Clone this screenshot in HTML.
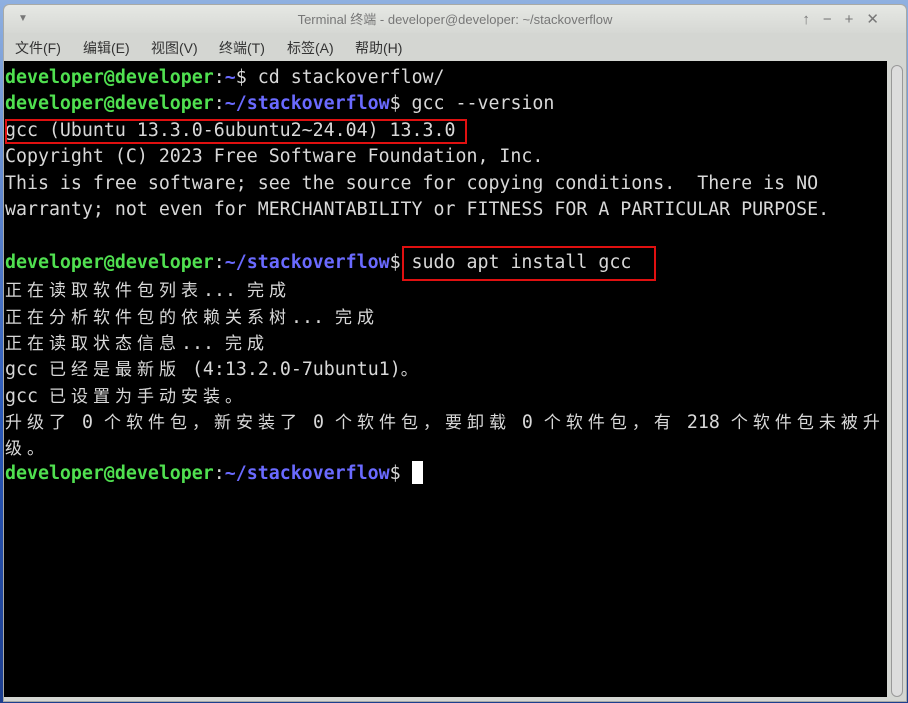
<!DOCTYPE html>
<html><head><meta charset="utf-8"><style>
html,body{margin:0;width:908px;height:703px;overflow:hidden}
body{background:#3a6bc0;position:relative;font-family:"Liberation Sans","Noto Sans CJK SC",sans-serif}
.bg{position:absolute;left:0;top:0;width:908px;height:703px;background:linear-gradient(180deg,#8fb0e0,#2a58b8 60%,#1e3f8f)}
.win{position:absolute;left:3px;top:4px;width:902px;height:696px;background:#d4d6d2;border-radius:6px 6px 0 0;border:1px solid #a8aaa6}
.title{position:absolute;left:0;top:0;width:100%;height:28px;background:linear-gradient(#e6e8e4,#d6d8d4);border-radius:6px 6px 0 0;color:#777;font-size:13px;text-align:center;line-height:30px}
.menu{position:absolute;left:11px;top:33px;font-size:14px;color:#333;white-space:nowrap}
.menu span{display:inline-block;width:68px}
.term{position:absolute;left:4px;top:61px;width:883px;height:636px;background:#000;overflow:hidden}
.sb{position:absolute;left:887px;top:60px;width:12px;height:632px;border:1px solid #999;border-radius:7px;background:#ddd;box-sizing:border-box}
.t{position:absolute;left:5px;top:65px;font-family:"DejaVu Sans Mono","Liberation Mono","Noto Sans CJK SC",monospace;font-size:18.25px;line-height:26.4px;color:#d8d8d8}
.t div{height:26.4px;white-space:pre}
.g{color:#50e050;font-weight:bold}.b{color:#6a6aff;font-weight:bold}
.c{display:inline-block;width:22px;font-family:"Noto Sans CJK SC",sans-serif;font-size:17px}
.box{position:absolute;border:2px solid #e01010;box-sizing:border-box}
.cur{position:absolute;left:412px;top:461px;width:11px;height:23px;background:#fff}
</style></head><body>
<div class="bg"></div>
<div class="win">
<div class="title"><span style="position:absolute;left:14px;top:-1px;font-size:10px">▼</span>Terminal 终端 - developer@developer: ~/stackoverflow<span style="position:absolute;right:14px;top:0;font-size:15px;letter-spacing:13px;color:#777">↑−+✕</span></div>
<div class="menu"><span>文件(F)</span><span>编辑(E)</span><span>视图(V)</span><span>终端(T)</span><span>标签(A)</span><span>帮助(H)</span></div>
<div class="sb"></div>
</div>
<div class="term"></div>
<div class="t"><div><span class="g">developer@developer</span>:<span class="b">~</span>$ cd stackoverflow/</div><div><span class="g">developer@developer</span>:<span class="b">~/stackoverflow</span>$ gcc --version</div><div>gcc (Ubuntu 13.3.0-6ubuntu2~24.04) 13.3.0</div><div>Copyright (C) 2023 Free Software Foundation, Inc.</div><div>This is free software; see the source for copying conditions.  There is NO</div><div>warranty; not even for MERCHANTABILITY or FITNESS FOR A PARTICULAR PURPOSE.</div><div></div><div><span class="g">developer@developer</span>:<span class="b">~/stackoverflow</span>$ sudo apt install gcc</div><div><span class="c">正</span><span class="c">在</span><span class="c">读</span><span class="c">取</span><span class="c">软</span><span class="c">件</span><span class="c">包</span><span class="c">列</span><span class="c">表</span>... <span class="c">完</span><span class="c">成</span></div><div><span class="c">正</span><span class="c">在</span><span class="c">分</span><span class="c">析</span><span class="c">软</span><span class="c">件</span><span class="c">包</span><span class="c">的</span><span class="c">依</span><span class="c">赖</span><span class="c">关</span><span class="c">系</span><span class="c">树</span>... <span class="c">完</span><span class="c">成</span></div><div><span class="c">正</span><span class="c">在</span><span class="c">读</span><span class="c">取</span><span class="c">状</span><span class="c">态</span><span class="c">信</span><span class="c">息</span>... <span class="c">完</span><span class="c">成</span></div><div>gcc <span class="c">已</span><span class="c">经</span><span class="c">是</span><span class="c">最</span><span class="c">新</span><span class="c">版</span> (4:13.2.0-7ubuntu1)<span class="c">。</span></div><div>gcc <span class="c">已</span><span class="c">设</span><span class="c">置</span><span class="c">为</span><span class="c">手</span><span class="c">动</span><span class="c">安</span><span class="c">装</span><span class="c">。</span></div><div><span class="c">升</span><span class="c">级</span><span class="c">了</span> 0 <span class="c">个</span><span class="c">软</span><span class="c">件</span><span class="c">包</span><span class="c">，</span><span class="c">新</span><span class="c">安</span><span class="c">装</span><span class="c">了</span> 0 <span class="c">个</span><span class="c">软</span><span class="c">件</span><span class="c">包</span><span class="c">，</span><span class="c">要</span><span class="c">卸</span><span class="c">载</span> 0 <span class="c">个</span><span class="c">软</span><span class="c">件</span><span class="c">包</span><span class="c">，</span><span class="c">有</span> 218 <span class="c">个</span><span class="c">软</span><span class="c">件</span><span class="c">包</span><span class="c">未</span><span class="c">被</span><span class="c">升</span></div><div><span class="c">级</span><span class="c">。</span></div><div><span class="g">developer@developer</span>:<span class="b">~/stackoverflow</span>$ </div></div>
<div class="box" style="left:5px;top:119px;width:462px;height:25px"></div>
<div class="box" style="left:402px;top:246px;width:254px;height:35px"></div>
<div class="cur"></div>
</body></html>
